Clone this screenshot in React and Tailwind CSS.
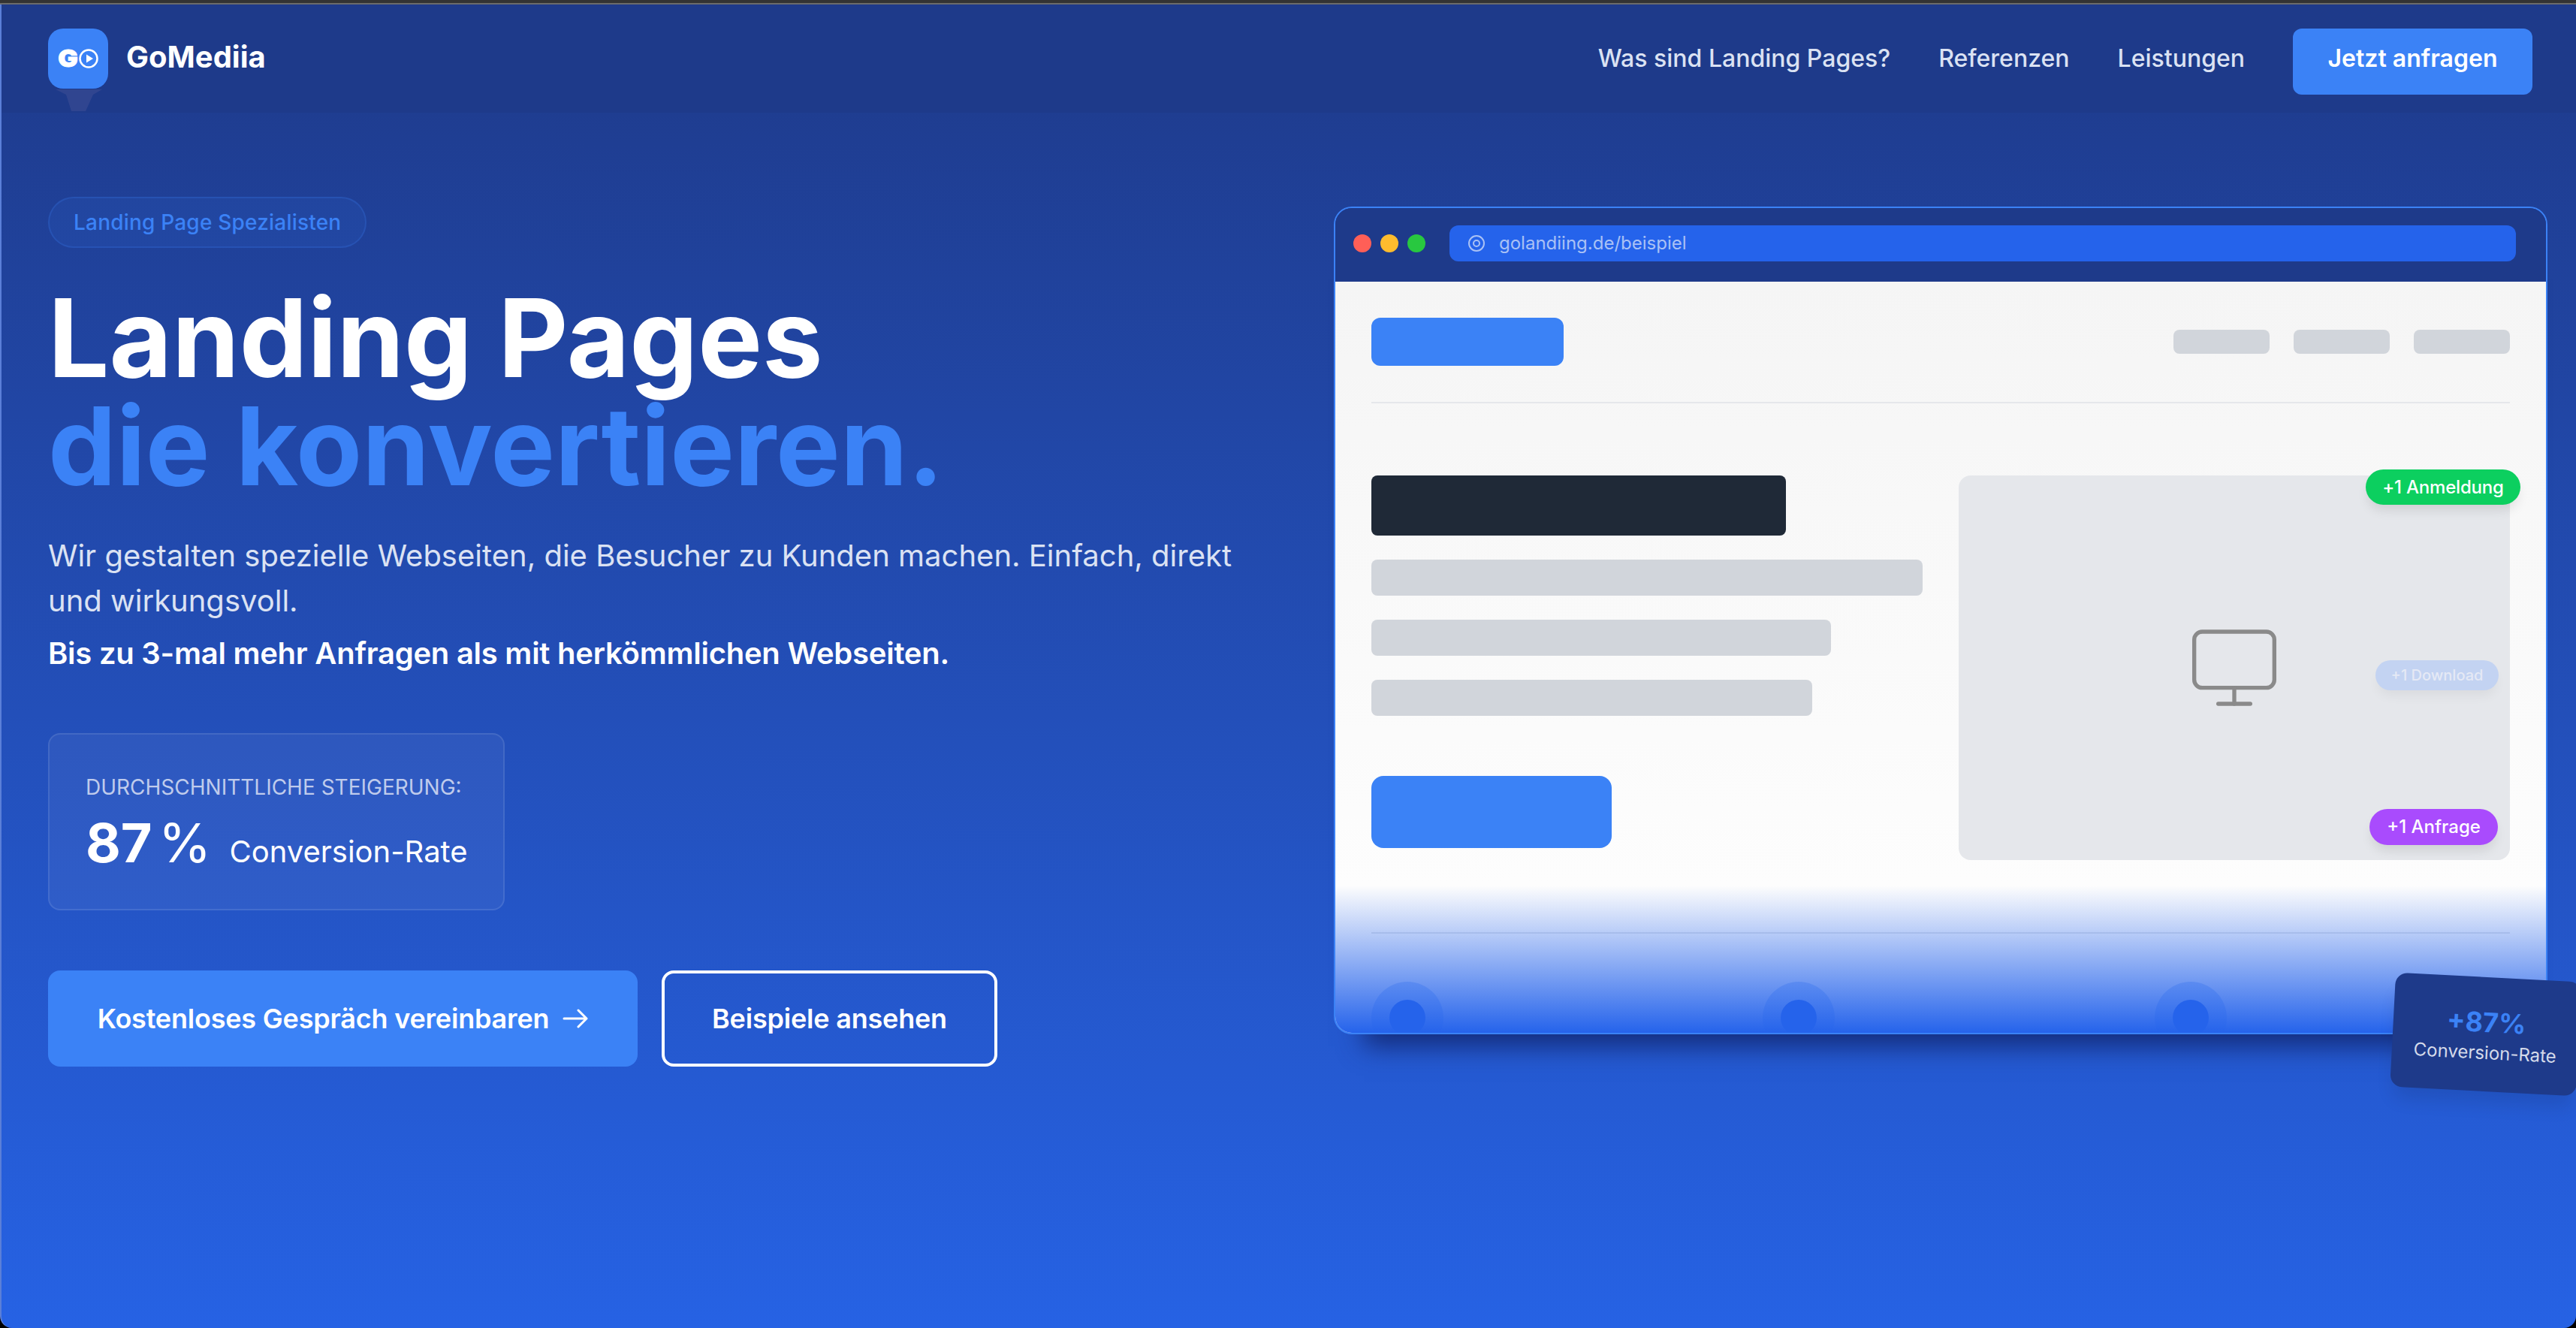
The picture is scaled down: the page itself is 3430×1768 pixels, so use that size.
import { Monitor } from "lucide-react";

function LogoMark() {
  return (
    <div className="relative w-20 h-20 shrink-0">
      <div className="relative z-10 w-20 h-20 rounded-[20px] bg-[#3b82f6] flex items-center justify-center gap-[2px] text-white">
        <span className="inline-block w-[25px] text-center text-[32px] leading-none font-black scale-x-110 [-webkit-text-stroke:1px_white]">G</span>
        <svg width="26" height="26" viewBox="0 0 26 26">
          <circle cx="13" cy="13" r="11.5" fill="none" stroke="white" strokeWidth="2.5" />
          <path d="M10 7.5 L19 13 L10 18.5 Z" fill="white" />
        </svg>
      </div>
      {/* odd little funnel under the logo */}
      <svg width="62" height="30" viewBox="0 0 62 30" className="absolute left-[10px] top-[80px]">
        <path d="M0 1 H62 L50 8 L40 30 H21 L14 8 Z" fill="#3f4f95" opacity="0.55" />
      </svg>
    </div>
  );
}

function Nav() {
  return (
    <header className="relative z-10 h-[144px] shrink-0 bg-[#1e3a8a] flex items-start justify-between pl-[62px] pr-[58px] pt-8">
      <div className="flex items-center gap-6">
        <LogoMark />
        <span className="text-[40px] font-bold text-white pb-1">GoMediia</span>
      </div>
      <nav className="flex items-center gap-16 h-[88px]">
        <a className="text-[32px] font-medium text-[#dbe2f3] pb-2">Was sind Landing Pages?</a>
        <a className="text-[32px] font-medium text-[#dbe2f3] pb-2">Referenzen</a>
        <a className="text-[32px] font-medium text-[#dbe2f3] pb-2">Leistungen</a>
        <button className="w-[319px] h-[88px] pb-2 rounded-xl bg-[#3b82f6] text-[32px] font-semibold text-white">Jetzt anfragen</button>
      </nav>
    </header>
  );
}

function HeroCopy() {
  return (
    <div className="w-[1774px] shrink-0 pl-[62px] pt-[112px]">
      <div className="inline-flex items-center h-[68px] px-[32px] rounded-full border-2 border-[#3b82f6]/20 bg-[#3b82f6]/10 text-[28px] font-medium tracking-[0.2px] text-[#3b82f6]">
        Landing Page Spezialisten
      </div>
      <h1 className="mt-[48px] text-[144px] leading-[144px] font-bold text-white">
        Landing Pages
        <span className="block text-[#3b82f6]">die konvertieren.</span>
      </h1>
      <p className="mt-[44px] w-[1640px] text-[40px] leading-[60px] text-[#dbe2f3]">
        Wir gestalten spezielle Webseiten, die Besucher zu Kunden machen. Einfach, direkt und wirkungsvoll.
      </p>
      <p className="mt-2.5 text-[40px] leading-[60px] font-semibold tracking-[-0.25px] text-white">
        Bis zu 3-mal mehr Anfragen als mit herkömmlichen Webseiten.
      </p>

      <div className="mt-[76px] w-[608px] h-[236px] rounded-2xl border-2 border-white/10 bg-white/5 pl-12 pt-12">
        <div className="text-[28px] leading-[44px] text-[#bfcbec] uppercase">Durchschnittliche Steigerung:</div>
        <div className="flex items-baseline gap-6 mt-2">
          <span className="text-[72px] leading-[88px] font-bold text-white">
            87<span className="font-normal ml-2">%</span>
          </span>
          <span className="text-[40px] text-white">Conversion-Rate</span>
        </div>
      </div>

      <div className="flex gap-8 mt-20">
        <button className="h-[128px] w-[785px] rounded-2xl bg-[#3b82f6] flex items-center justify-center gap-[18px] text-[36px] font-semibold tracking-[-0.2px] text-white">
          Kostenloses Gespräch vereinbaren
          <svg width="34" height="26" viewBox="0 0 34 26" fill="none" stroke="white" strokeWidth="3" strokeLinecap="round" strokeLinejoin="round">
            <path d="M2 13 H32 M21 2 L32 13 L21 24" />
          </svg>
        </button>
        <button className="h-[128px] w-[447px] rounded-2xl border-4 border-white text-[36px] font-semibold tracking-[-0.2px] text-white">
          Beispiele ansehen
        </button>
      </div>
    </div>
  );
}

function BrowserChrome() {
  return (
    <div className="h-[98px] bg-[#1e3a8a] flex items-center pl-6 pr-10 pb-1 shrink-0">
      <div className="flex gap-3">
        <div className="w-6 h-6 rounded-full bg-[#ff5f57]" />
        <div className="w-6 h-6 rounded-full bg-[#febc2e]" />
        <div className="w-6 h-6 rounded-full bg-[#28c840]" />
      </div>
      <div className="ml-8 flex-1 h-12 rounded-xl bg-[#2563eb] flex items-center pl-6 gap-[18px]">
        <svg width="24" height="24" viewBox="0 0 24 24" fill="none" stroke="#a9c1f5" strokeWidth="2">
          <circle cx="12" cy="12" r="10" />
          <circle cx="12" cy="12" r="4" />
        </svg>
        <span className="text-2xl text-[#a9c1f5]">golandiing.de/beispiel</span>
      </div>
    </div>
  );
}

function Bar({ width }) {
  return <div className={`h-12 rounded-lg bg-[#d1d5db] ${width}`} />;
}

function MockPage() {
  return (
    <div className="relative flex-1 overflow-hidden bg-gradient-to-b from-[#f5f5f5] to-white px-12 pt-12">
      <div className="flex items-center justify-between pb-12 border-b-2 border-[#e5e7eb]">
        <div className="w-64 h-16 rounded-xl bg-[#3b82f6]" />
        <div className="flex gap-8">
          <div className="w-32 h-8 rounded-lg bg-[#d1d5db]" />
          <div className="w-32 h-8 rounded-lg bg-[#d1d5db]" />
          <div className="w-32 h-8 rounded-lg bg-[#d1d5db]" />
        </div>
      </div>

      <div className="grid grid-cols-2 gap-12 mt-24">
        <div>
          <div className="w-[552px] h-20 rounded-lg bg-[#1f2937]" />
          <div className="flex flex-col gap-8 mt-8">
            <Bar width="w-full" />
            <Bar width="w-[612px]" />
            <Bar width="w-[587px]" />
          </div>
          <div className="w-80 h-24 rounded-2xl bg-[#3b82f6] mt-20" />
        </div>
        <div className="relative h-[512px] rounded-2xl bg-[#e5e7eb] flex items-center justify-center">
          <Monitor size={128} strokeWidth={1} className="text-[#8a8a8a]" />
          <div className="absolute -top-2 -right-3.5 h-[47px] w-[206px] rounded-full bg-[#0ccf5f] flex items-center justify-center text-2xl font-medium tracking-[-0.2px] text-white shadow-[0_10px_15px_-3px_rgba(0,0,0,0.1)]">
            +1 Anmeldung
          </div>
          <div className="absolute top-[246px] right-[15px] h-10 w-[164px] rounded-full bg-[#c3d3f2] flex items-center justify-center text-[20px] font-medium text-[#e5e9f5] shadow-[0_10px_15px_-3px_rgba(0,0,0,0.05)]">
            +1 Download
          </div>
          <div className="absolute top-[444px] right-4 h-12 w-[171px] rounded-full bg-[#a94bfd] flex items-center justify-center text-2xl font-medium text-white shadow-[0_10px_15px_-3px_rgba(0,0,0,0.1)]">
            +1 Anfrage
          </div>
        </div>
      </div>

      <div className="border-t-2 border-[#e5e7eb] mt-24 pt-16 grid grid-cols-3 gap-12">
        <FeatureDot />
        <FeatureDot />
        <FeatureDot />
      </div>

      {/* page fades into the hero at the bottom */}
      <div className="absolute left-0 right-0 bottom-0 h-[196px] bg-gradient-to-b from-transparent to-[#2563eb]" />
    </div>
  );
}

function FeatureDot() {
  return (
    <div className="w-24 h-24 rounded-full bg-[#3b82f6]/30 flex items-center justify-center">
      <div className="w-12 h-12 rounded-full bg-[#2563eb]" />
    </div>
  );
}

function BrowserMock() {
  return (
    <div className="relative w-[1616px] h-[1102px] mt-[125px] shrink-0">
      <div className="h-full rounded-3xl border-2 border-[#3b82f6] overflow-hidden flex flex-col shadow-[0_56px_32px_-40px_rgba(20,45,125,1)]">
        <BrowserChrome />
        <MockPage />
      </div>
      <div className="absolute -right-[42px] -bottom-[76px] w-[248px] h-[152px] rotate-3 rounded-2xl bg-[#1e3a8a] flex flex-col items-center justify-center shadow-[0_20px_25px_-5px_rgba(0,0,0,0.1)]">
        <span className="text-[36px] leading-[50px] font-bold text-[#3b82f6]">+87%</span>
        <span className="text-2xl leading-8 text-[#d5dbea]">Conversion-Rate</span>
      </div>
    </div>
  );
}

export default function App() {
  return (
    <div className="w-[3430px] h-[1768px] overflow-hidden bg-black font-['Inter',sans-serif]">
      <div className="h-1 bg-[#333333]" />
      <div className="h-0.5 bg-[#6b6b6b]" />
      <div className="h-[1762px] flex flex-col overflow-hidden rounded-b-2xl border-l-2 border-[#5b7fd8] bg-gradient-to-b from-[#1e3a8a] to-[#2662e4]">
        <Nav />
        <main className="flex">
          <HeroCopy />
          <BrowserMock />
        </main>
      </div>
    </div>
  );
}
